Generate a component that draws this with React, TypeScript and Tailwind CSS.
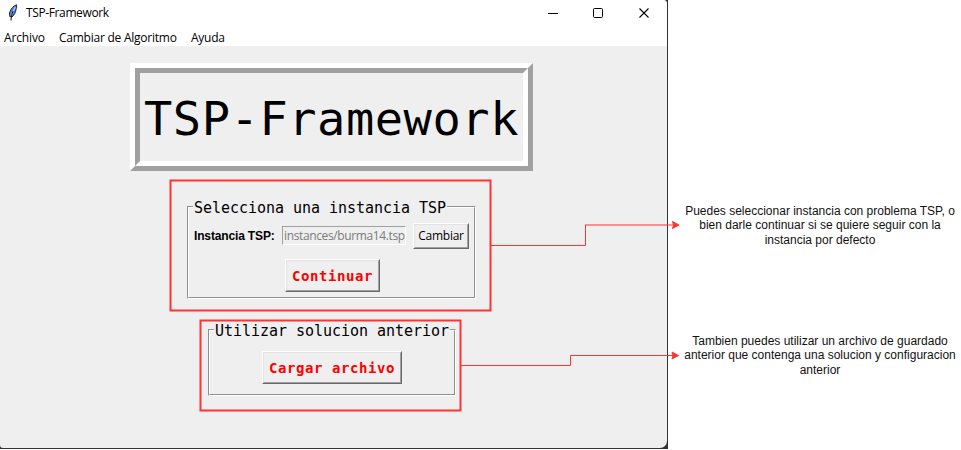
import type { ReactNode } from "react";

const ui = "font-['Open_Sans','Noto_Sans',sans-serif]";
const mono = "font-['DejaVu_Sans_Mono',monospace]";

function Feather() {
  return (
    <svg width="12" height="18" viewBox="0 0 12 18" className="block">
      <path d="M9.500 0.800C7 1.500 4 4.500 3 7.500C2.300 9.500 2.300 11 2.800 12.500L5 13C7.500 10.500 8.800 8 9 5.500C9.600 4 10 2.500 9.500 0.800Z" fill="#4f86d0" stroke="#1b2433" strokeWidth="1" />
      <path d="M8.300 3C6.500 6 5 9 4.200 11.500" fill="none" stroke="#a9cbf3" strokeWidth="1.200" />
      <path d="M6 7C4.800 10 4 13 4 16.500" fill="none" stroke="#111" strokeWidth="1" />
    </svg>
  );
}

function TitleBar() {
  return (
    <header className="flex h-[25px] items-center bg-white pl-[7px]">
      <Feather />
      <span className={`${ui} ml-[7px] w-[84px] whitespace-nowrap text-[12px] leading-[16px] tracking-[-0.38px] text-black`}>TSP-Framework</span>
      <svg width="105" height="14" viewBox="0 0 105 14" className="ml-auto mr-[16px]" fill="none" stroke="#000">
        <path d="M2 7.500H12" />
        <rect x="47.500" y="2.500" width="9" height="9" rx="1" />
        <path d="M93.500 2.500L102.500 11.500M102.500 2.500L93.500 11.500" strokeWidth="1.100" />
      </svg>
    </header>
  );
}

function MenuBar() {
  return (
    <nav className={`${ui} flex h-[21px] bg-white pl-1 text-[12px] leading-[26px] text-black whitespace-nowrap`}>
      <span className="w-[55px] tracking-[-0.15px]">Archivo</span>
      <span className="w-[132px] tracking-[-0.24px]">Cambiar de Algoritmo</span>
      <span className="tracking-[-0.25px]">Ayuda</span>
    </nav>
  );
}

function Group({ legend, className, legendClass, children }: { legend: string; className: string; legendClass: string; children: ReactNode }) {
  return (
    <section className={`border border-b-white border-l-[#8f8f8f] border-r-white border-t-[#8f8f8f] ${className}`}>
      <div className="h-full border border-b-[#8f8f8f] border-l-white border-r-[#8f8f8f] border-t-white">
        <div className={`${mono} h-[18px] whitespace-nowrap bg-[#efefef] text-[15px] leading-[18px] tracking-[-0.03px] text-black ${legendClass}`}>{legend}</div>
        {children}
      </div>
    </section>
  );
}

function TkButton({ className, children }: { className: string; children: ReactNode }) {
  return (
    <button className={`block border border-b-[#696969] border-l-white border-r-[#696969] border-t-white ${className}`}>
      <span className="flex h-full w-full items-center justify-center whitespace-nowrap border border-b-[#a0a0a0] border-l-[#e3e3e3] border-r-[#a0a0a0] border-t-[#e3e3e3] bg-[#efefef]">
        {children}
      </span>
    </button>
  );
}

function Annotations() {
  return (
    <svg width="961" height="450" className="pointer-events-none absolute left-0 top-0" fill="none" stroke="#ff3333">
      <rect x="170.500" y="180.500" width="320" height="130" strokeWidth="2" />
      <rect x="200.500" y="320.500" width="260" height="90" strokeWidth="2" />
      <path d="M491 245.500H585.500V225" />
      <path d="M585 225H674" />
      <path d="M461 365.500H570.500V355.500H674" />
      <path d="M679 225L672.500 228.500L673.500 225L672.500 221.500Z" fill="#ff3333" />
      <path d="M678.500 355.500L672 359L673 355.500L672 352Z" fill="#ff3333" />
    </svg>
  );
}

export default function App() {
  return (
    <div className="relative flex h-[450px] w-[961px] overflow-hidden bg-white">
      <div className="h-[449px] w-[668px] shrink-0 bg-[#333333]">
        <div className="flex h-[448px] w-[667px] flex-col overflow-hidden rounded-bl-[3px] rounded-br-[7px] rounded-tr-[4px] bg-[#efefef]">
          <TitleBar />
          <MenuBar />
          <main className="flex flex-col items-start">
            <div className="ml-[130px] mt-[17px] h-[108px] w-[403px] border-[5px] border-b-[#a0a0a0] border-l-white border-r-[#a0a0a0] border-t-white">
              <div className="h-full border-[5px] border-b-white border-l-[#a0a0a0] border-r-white border-t-[#a0a0a0]">
                <h1 className={`${mono} whitespace-nowrap pl-[4px] text-[47px] leading-[92px] tracking-[0.55px] text-black`}>TSP-Framework</h1>
              </div>
            </div>
            <Group legend="Selecciona una instancia TSP" className="ml-[187px] mt-[35px] h-[93px] w-[289px]" legendClass="-mt-[9px] ml-[4px] w-[254px] pl-px">
              <div className="flex pl-[5px]">
                <span className="mt-[11px] w-[88px] whitespace-nowrap font-['Liberation_Sans',sans-serif] text-[12px] font-bold leading-[16px] tracking-[-0.15px] text-black">Instancia TSP:</span>
                <div className={`${ui} mt-[9px] h-[19px] w-[124px] whitespace-nowrap border border-b-white border-l-[#a0a0a0] border-r-white border-t-[#a0a0a0] pl-px text-[12px] leading-[18px] tracking-[-0.37px] text-[#7b7b7b]`}>instances/burma14.tsp</div>
                <TkButton className={`${ui} ml-[7px] mt-[6px] h-[26px] w-[56px] text-[12px] tracking-[-0.25px] text-black`}>Cambiar</TkButton>
              </div>
              <TkButton className={`${mono} ml-[96px] mt-[10px] h-[33px] w-[95px] text-[14px] font-bold tracking-[0.57px] text-[#ff0000]`}><span className="pt-[2px]">Continuar</span></TkButton>
            </Group>
            <Group legend="Utilizar solucion anterior" className="ml-[208px] mt-[30px] h-[67px] w-[248px]" legendClass="-mt-[9px] ml-[4px] w-[236px] pl-px">
              <TkButton className={`${mono} ml-[52px] mt-[11px] h-[33px] w-[140px] text-[14px] font-bold tracking-[0.57px] text-[#ff0000]`}><span className="pt-[2px]">Cargar archivo</span></TkButton>
            </Group>
          </main>
        </div>
      </div>
      <aside className="ml-[12px] flex w-[280px] flex-col pt-[204px] text-center font-['Liberation_Sans',sans-serif] text-[12px] leading-[14.4px] text-[#111111]">
        <p className="h-[130px] whitespace-nowrap">Puedes seleccionar instancia con problema TSP, o<br />bien darle continuar si se quiere seguir con la<br />instancia por defecto</p>
        <p className="whitespace-nowrap">Tambien puedes utilizar un archivo de guardado<br />anterior que contenga una solucion y configuracion<br />anterior</p>
      </aside>
      <Annotations />
    </div>
  );
}
